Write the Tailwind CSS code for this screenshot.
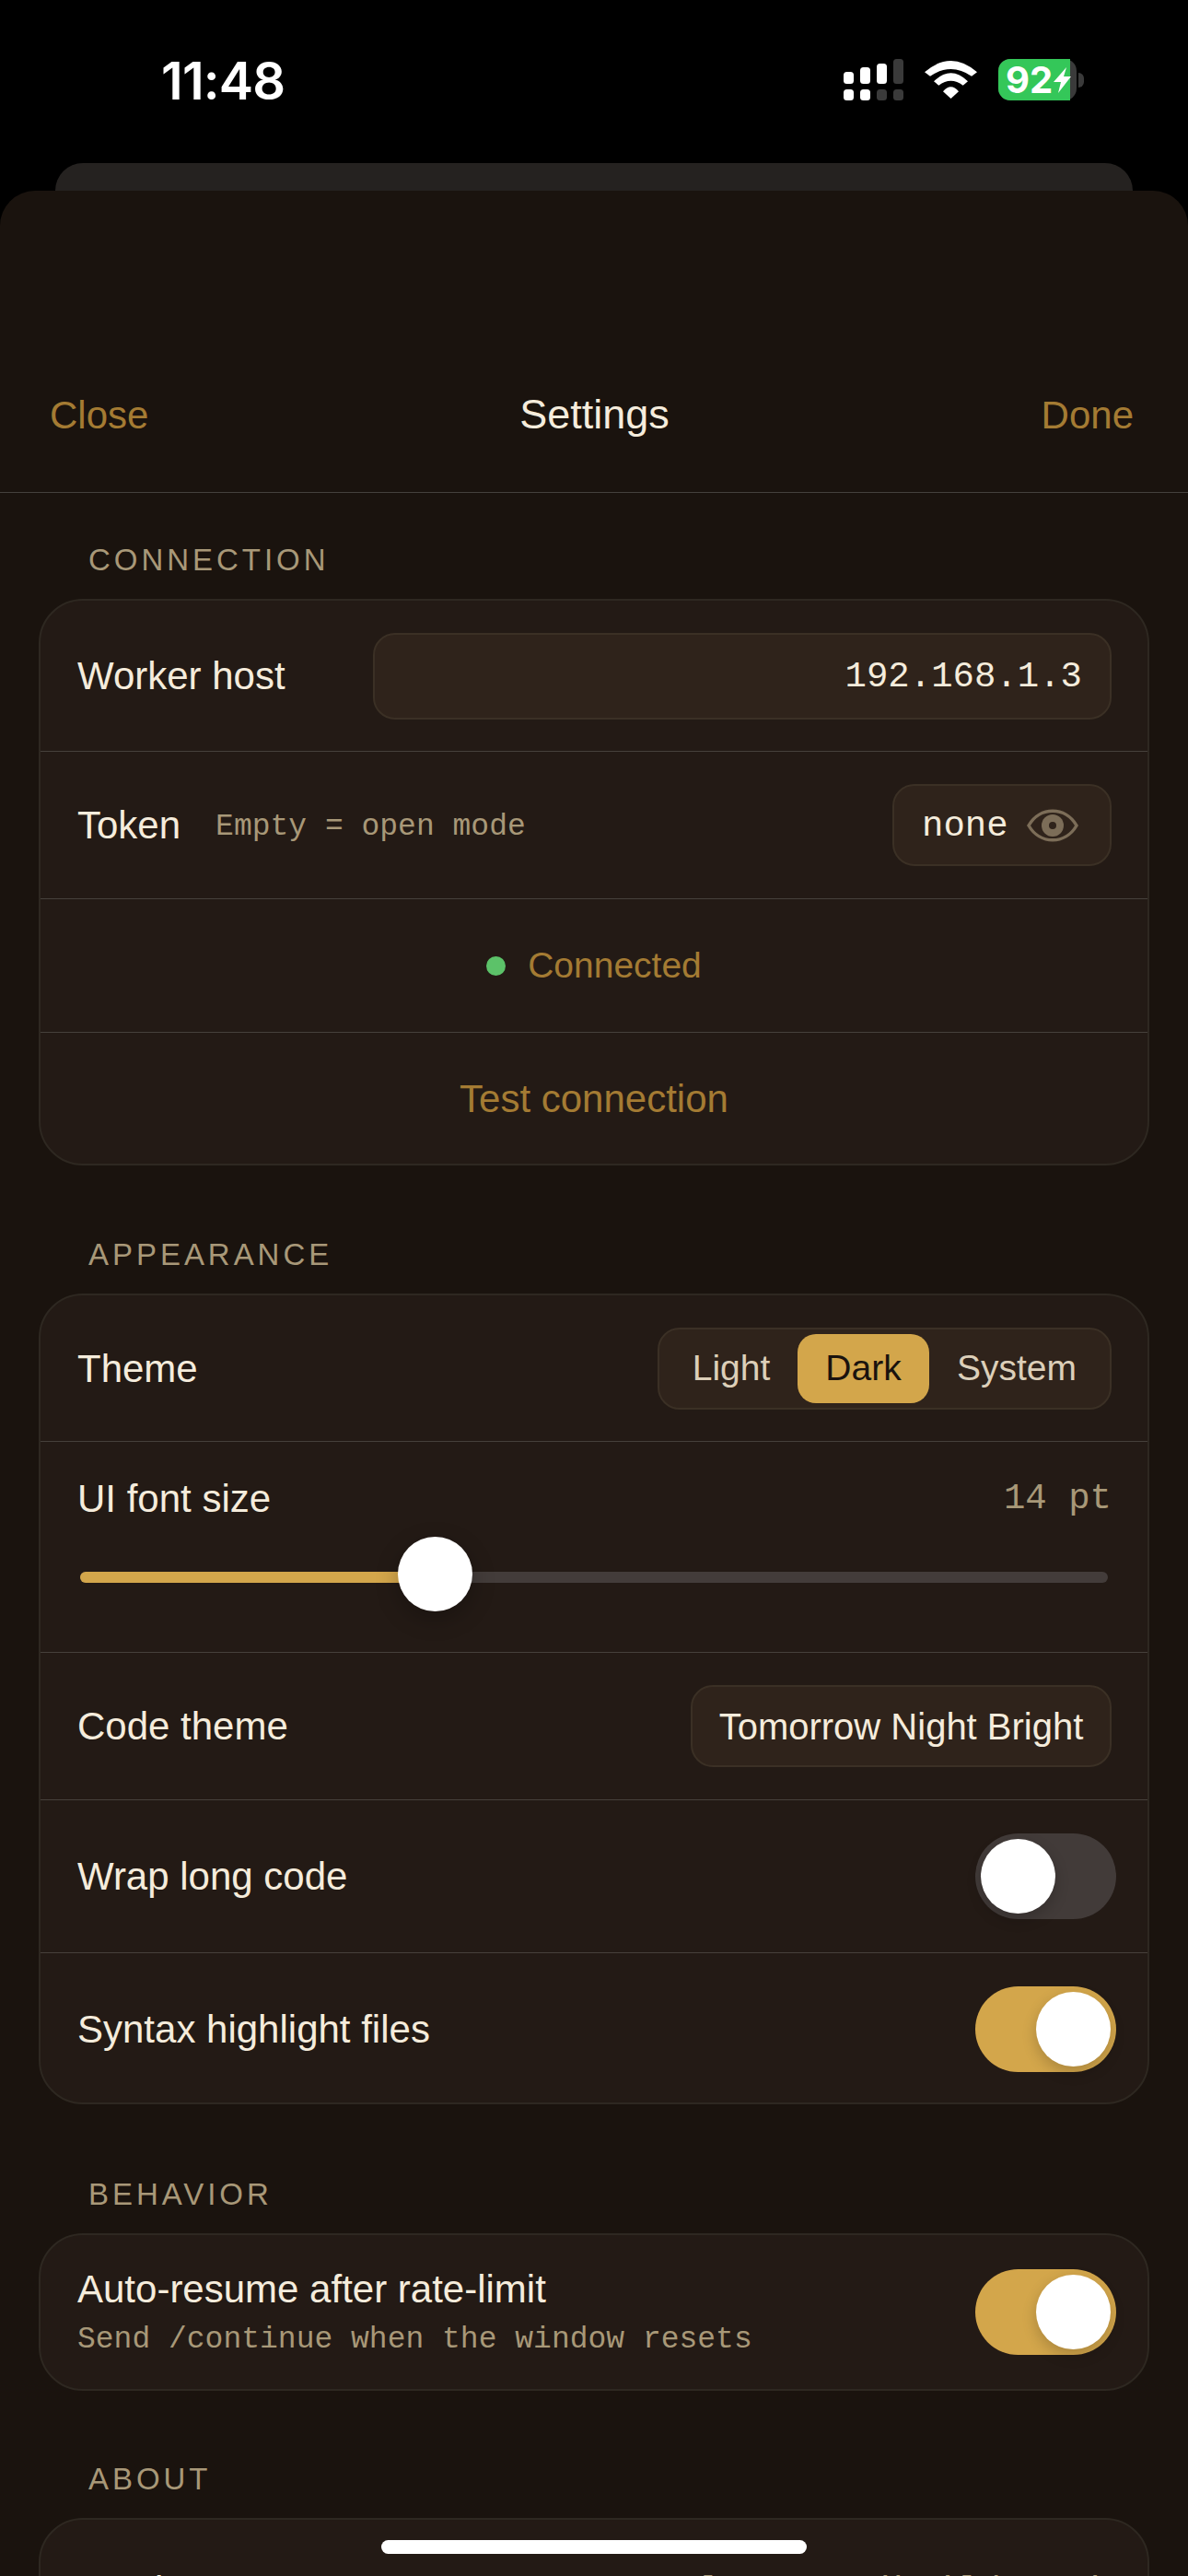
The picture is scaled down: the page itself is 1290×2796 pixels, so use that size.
<!doctype html>
<html lang="en">
<head>
    <meta charset="UTF-8">
    <title>Settings</title>
    <script src="https://cdn.jsdelivr.net/npm/@tailwindcss/browser@4"></script>
</head>
<body class="bg-black">
<div class="relative w-[1290px] h-[2796px] overflow-hidden bg-black font-['Liberation_Sans',sans-serif] text-[#f5ecdc]">

    <!-- status bar -->
    <div class="flex items-start justify-between h-[177px] pl-[175px] pr-[113px] pt-[58px]">
        <span class="text-[56px] leading-[60px] font-semibold font-['Inter',sans-serif] tracking-[-0.8px] text-white">11:48</span>
        <div class="flex items-center gap-[23px] h-[45px] mt-[6px]">
            <svg width="65" height="45" viewBox="0 0 65 45">
                <rect x="0" y="14" width="11" height="13" rx="3.5" fill="#fff"/>
                <rect x="18" y="9" width="11" height="18" rx="3.5" fill="#fff"/>
                <rect x="36" y="5" width="11" height="22" rx="3.5" fill="#fff"/>
                <rect x="54" y="0" width="11" height="27" rx="3.5" fill="#3a3a3a"/>
                <rect x="0" y="33" width="11" height="12" rx="3.5" fill="#fff"/>
                <rect x="18" y="33" width="11" height="12" rx="3.5" fill="#fff"/>
                <rect x="36" y="33" width="11" height="12" rx="3.5" fill="#3a3a3a"/>
                <rect x="54" y="33" width="11" height="12" rx="3.5" fill="#3a3a3a"/>
            </svg>
            <svg width="57" height="41" viewBox="0 0 57 41">
                <path d="M0 12.3Q28.5 -12.3 57 12.3L51 16.7Q28.5 1.3 6 16.7Z" fill="#fff"/>
                <path d="M10 22.3Q28.5 4.3 47 22.3L41.7 26.7Q28.5 16.7 15.3 26.7Z" fill="#fff"/>
                <path d="M20 33.3Q28.5 23.3 37 33.3L28.5 41Z" fill="#fff"/>
            </svg>
            <div class="flex items-center gap-[2px]">
                <div class="relative w-[85px] h-[45px] rounded-[13px] bg-[#3a3a3a]">
                    <div class="flex items-center h-full w-[78px] rounded-l-[13px] bg-[#34c759] pl-[8px] text-[40px] font-bold font-['Inter',sans-serif] text-white leading-none">92</div>
                    <svg width="19" height="28" viewBox="0 0 19 28" class="absolute left-[60px] top-[9px]">
                        <path d="M14 0L0 16H8L5 28L19 10H11Z" fill="#fff"/>
                    </svg>
                </div>
                <div class="w-[6px] h-[16px] rounded-r-[6px] bg-[#3a3a3a]"></div>
            </div>
        </div>
    </div>

    <!-- sheet behind -->
    <div class="absolute left-[60px] top-[177px] w-[1170px] h-[80px] rounded-t-[30px] bg-[#252220]"></div>

    <!-- settings sheet -->
    <div class="absolute left-0 top-[207px] w-[1290px] h-[2589px] rounded-t-[38px] bg-[#1a130e] overflow-hidden">
        <header class="grid grid-cols-3 items-end h-[328px] pl-[54px] pr-[59px] pb-[56px] border-b border-[#45413d] text-[42px] leading-[54px] text-[#a47b33]">
            <span>Close</span>
            <span class="text-center text-[45px] mb-[1px] ml-[6px] text-[#f5ecdc]">Settings</span>
            <span class="text-right">Done</span>
        </header>

        <div class="flex flex-col px-[42px]">

            <!-- connection -->
            <h2 class="h-[115px] pt-[53px] pl-[54px] text-[33px] leading-[40px] tracking-[3.96px] text-[#a89878]">CONNECTION</h2>
            <section class="rounded-[48px] border-2 border-[#2e2821] bg-[#231a15] overflow-hidden">
                <div class="flex items-center justify-between h-[164px] pl-[40px] pr-[39px] border-b border-[#46403b]">
                    <span class="text-[42px]">Worker host</span>
                    <div class="flex items-center justify-end w-[802px] h-[94px] pr-[30px] pt-[4px] rounded-[24px] border-2 border-[#3b3025] bg-[#2f231b] font-['Liberation_Mono',monospace] text-[39px]">192.168.1.3</div>
                </div>
                <div class="flex items-center justify-between h-[160px] pl-[40px] pr-[39px] border-b border-[#46403b]">
                    <div class="flex items-center gap-[38px]">
                        <span class="text-[42px]">Token</span>
                        <span class="pt-[4px] font-['Liberation_Mono',monospace] text-[33px] text-[#a89878]">Empty = open mode</span>
                    </div>
                    <div class="flex items-center w-[238px] h-[89px] pl-[30px] gap-[20px] rounded-[24px] border-2 border-[#3b3025] bg-[#2f231b] font-['Liberation_Mono',monospace] text-[39px]">
                        <span class="pt-[4px]">none</span>
                        <svg width="56" height="36" viewBox="0 0 56 36">
                            <path d="M2 18C14 -3 42 -3 54 18C42 39 14 39 2 18Z" fill="none" stroke="#7c6d58" stroke-width="3.5"/>
                            <circle cx="28" cy="18" r="12" fill="#7c6d58"/>
                            <circle cx="28" cy="18" r="4" fill="#2f231b"/>
                        </svg>
                    </div>
                </div>
                <div class="flex items-center justify-center gap-[24px] h-[145px] border-b border-[#46403b] text-[39px] text-[#a47b33]">
                    <span class="w-[21px] h-[21px] rounded-full bg-[#5cc269]"></span>
                    <span>Connected</span>
                </div>
                <div class="flex items-center justify-center h-[142px] text-[42px] text-[#a47b33]">Test connection</div>
            </section>

            <!-- appearance -->
            <h2 class="h-[139px] pt-[77px] pl-[54px] text-[33px] leading-[40px] tracking-[3.96px] text-[#a89878]">APPEARANCE</h2>
            <section class="rounded-[48px] border-2 border-[#2e2821] bg-[#231a15] overflow-hidden">
                <div class="flex items-center justify-between h-[159px] pl-[40px] pr-[39px] border-b border-[#46403b]">
                    <span class="text-[42px]">Theme</span>
                    <div class="flex items-center w-[493px] h-[89px] px-[6px] rounded-[24px] border-2 border-[#3b3025] bg-[#2f231b] text-[39px] text-[#dccfb9]">
                        <span class="flex items-center justify-center w-[144px] h-[75px]">Light</span>
                        <span class="flex items-center justify-center w-[143px] h-[75px] rounded-[20px] bg-[#d3a64b] text-[#1a130e]">Dark</span>
                        <span class="flex items-center justify-center flex-1 h-[75px]">System</span>
                    </div>
                </div>
                <div class="h-[229px] pl-[40px] pr-[39px] pt-[34px] border-b border-[#46403b]">
                    <div class="flex items-center justify-between h-[54px]">
                        <span class="text-[42px]">UI font size</span>
                        <span class="pt-[3px] font-['Liberation_Mono',monospace] text-[39px] text-[#a89878]">14 pt</span>
                    </div>
                    <div class="relative mt-[53px] ml-[3px] mr-[4px] h-[12px] rounded-full bg-[#433c3a]">
                        <div class="h-full w-[360px] rounded-l-full bg-[#d3a64b]"></div>
                        <div class="absolute left-[345px] top-[-38px] w-[81px] h-[81px] rounded-full bg-white shadow-[0_8px_24px_rgba(0,0,0,0.25)]"></div>
                    </div>
                </div>
                <div class="flex items-center justify-between h-[160px] pl-[40px] pr-[39px] border-b border-[#46403b]">
                    <span class="text-[42px]">Code theme</span>
                    <div class="flex items-center justify-center w-[457px] h-[89px] rounded-[24px] border-2 border-[#3b3025] bg-[#2f231b] text-[40px]">Tomorrow Night Bright</div>
                </div>
                <div class="flex items-center justify-between h-[166px] pl-[40px] pr-[34px] border-b border-[#46403b]">
                    <span class="text-[42px]">Wrap long code</span>
                    <div class="flex items-center w-[153px] h-[93px] rounded-full bg-[#423b39] pl-[6px]">
                        <div class="w-[81px] h-[81px] rounded-full bg-white shadow-[0_6px_16px_rgba(0,0,0,0.2)]"></div>
                    </div>
                </div>
                <div class="flex items-center justify-between h-[162px] pt-[3px] pl-[40px] pr-[34px]">
                    <span class="text-[42px]">Syntax highlight files</span>
                    <div class="flex items-center justify-end w-[153px] h-[93px] rounded-full bg-[#d3a64b] pr-[6px]">
                        <div class="w-[81px] h-[81px] rounded-full bg-white shadow-[0_6px_16px_rgba(0,0,0,0.2)]"></div>
                    </div>
                </div>
            </section>

            <!-- behavior -->
            <h2 class="h-[140px] pt-[78px] pl-[54px] text-[33px] leading-[40px] tracking-[3.96px] text-[#a89878]">BEHAVIOR</h2>
            <section class="rounded-[48px] border-2 border-[#2e2821] bg-[#231a15] overflow-hidden">
                <div class="flex items-center justify-between h-[167px] pl-[40px] pr-[34px]">
                    <div class="flex flex-col gap-[6px]">
                        <span class="text-[42px] leading-[50px]">Auto-resume after rate-limit</span>
                        <span class="pt-[4px] font-['Liberation_Mono',monospace] text-[33px] leading-[40px] text-[#a89878]">Send /continue when the window resets</span>
                    </div>
                    <div class="flex items-center justify-end w-[153px] h-[93px] rounded-full bg-[#d3a64b] pr-[6px]">
                        <div class="w-[81px] h-[81px] rounded-full bg-white shadow-[0_6px_16px_rgba(0,0,0,0.2)]"></div>
                    </div>
                </div>
            </section>

            <!-- about -->
            <h2 class="h-[138px] pt-[76px] pl-[54px] text-[33px] leading-[40px] tracking-[3.96px] text-[#a89878]">ABOUT</h2>
            <section class="rounded-[48px] border-2 border-[#2e2821] bg-[#231a15] overflow-hidden">
                <div class="flex items-center justify-between h-[152px] pl-[40px] pr-[42px]">
                    <span class="text-[42px]">Version</span>
                    <span class="pt-[4px] font-['Liberation_Mono',monospace] text-[39px] text-[#a89878]">tool 0.0.0 (build 142)</span>
                </div>
            </section>
        </div>
    </div>

    <!-- home indicator -->
    <div class="absolute left-[414px] top-[2757px] w-[462px] h-[15px] rounded-full bg-white"></div>
</div>
</body>
</html>
